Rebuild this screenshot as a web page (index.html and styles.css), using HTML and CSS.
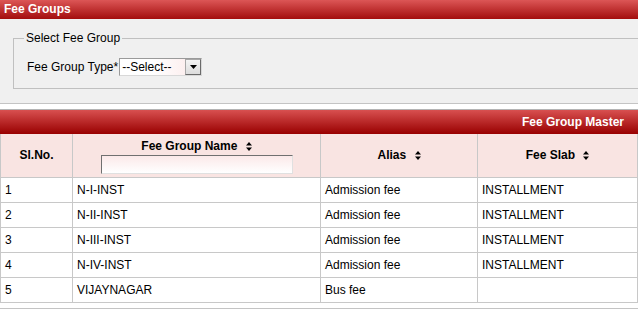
FILE: index.html
```html
<!DOCTYPE html>
<html lang="en">
<head>
  <meta charset="UTF-8" />
  <title>Fee Groups</title>
  <link rel="stylesheet" href="styles.css">
</head>
<body>
  <div class="panel-title">Fee Groups</div>

  <div class="filter-area">
    <fieldset class="group-box">
      <legend>Select Fee Group</legend>
      <div class="field-row">
        <label for="feeGroupType">Fee Group Type*</label>
        <div class="select-box" id="feeGroupType">
          <span class="select-text">--Select--</span>
          <span class="select-btn">
            <svg width="7" height="4" viewBox="0 0 7 4"><polygon points="0,0 7,0 3.5,4" fill="#000"/></svg>
          </span>
        </div>
      </div>
    </fieldset>
  </div>

  <div class="grid-title">Fee Group Master</div>
  <table class="grid">
    <colgroup>
      <col class="c1"><col class="c2"><col class="c3"><col class="c4">
    </colgroup>
    <thead>
      <tr>
        <th>Sl.No.</th>
        <th class="name-head">
          <div>Fee Group Name <span class="sort"><svg width="6" height="9" viewBox="0 0 6 9"><polygon points="0,3.5 3,0 6,3.5"/><polygon points="0,5.5 6,5.5 3,9"/></svg></span></div>
          <input class="filter-input" type="text">
        </th>
        <th>Alias <span class="sort"><svg width="6" height="9" viewBox="0 0 6 9"><polygon points="0,3.5 3,0 6,3.5"/><polygon points="0,5.5 6,5.5 3,9"/></svg></span></th>
        <th>Fee Slab <span class="sort"><svg width="6" height="9" viewBox="0 0 6 9"><polygon points="0,3.5 3,0 6,3.5"/><polygon points="0,5.5 6,5.5 3,9"/></svg></span></th>
      </tr>
    </thead>
    <tbody>
      <tr><td>1</td><td>N-I-INST</td><td>Admission fee</td><td>INSTALLMENT</td></tr>
      <tr><td>2</td><td>N-II-INST</td><td>Admission fee</td><td>INSTALLMENT</td></tr>
      <tr><td>3</td><td>N-III-INST</td><td>Admission fee</td><td>INSTALLMENT</td></tr>
      <tr><td>4</td><td>N-IV-INST</td><td>Admission fee</td><td>INSTALLMENT</td></tr>
      <tr><td>5</td><td>VIJAYNAGAR</td><td>Bus fee</td><td></td></tr>
    </tbody>
  </table>
  <div class="bottom-line"></div>
</body>
</html>
```

FILE: styles.css
```css
* { box-sizing: border-box; }
body {
  margin: 0;
  font-family: 'Liberation Sans', Arial, sans-serif;
  font-size: 12px;
  color: #000;
  background: #fff;
  overflow: hidden;
}
.panel-title {
  height: 19px;
  line-height: 19px;
  padding-left: 4px;
  color: #fff;
  font-weight: bold;
  background: linear-gradient(to bottom, #dc5656, #a30d0d);
}
.filter-area {
  height: 85px;
  background: #f0f0f0;
  border-bottom: 1px solid #c4c4c4;
  padding-top: 12px;
  overflow: hidden;
}
.group-box {
  margin: 0 -10px 0 13px;
  padding: 13px 8px 12px 13px;
  border: 1px solid #c0c0c0;
}
.group-box legend {
  padding: 0 2px;
  margin-left: -3px;
  line-height: 14px;
}
.field-row {
  display: flex;
  align-items: center;
  height: 18px;
}
.field-row label {
  margin-right: 1px;
}
.select-box {
  display: flex;
  width: 83px;
  height: 18px;
  border: 1px solid #9a9a9a;
  border-right-color: #d8d8d8;
  border-bottom-color: #d8d8d8;
  background: linear-gradient(to right, #fff 40%, #fbe8e8);
}
.select-text {
  flex: 1;
  padding-left: 2px;
  line-height: 16px;
}
.select-btn {
  width: 16px;
  display: flex;
  align-items: center;
  justify-content: center;
  background: linear-gradient(to bottom, #f4f4f4, #dcdcdc);
  border: 1px solid #6a6a6a;
  border-top-color: #a8a8a8;
  border-left-color: #a8a8a8;
}
.grid-title {
  margin-top: 5px;
  height: 25px;
  border-top: 1px solid #b4b4b4;
  line-height: 24px;
  text-align: right;
  padding-right: 14px;
  color: #fff;
  font-weight: bold;
  background: linear-gradient(to bottom, #d85050, #990000);
}
.grid {
  width: 637px;
  border-collapse: collapse;
  table-layout: fixed;
}
.grid col.c1 { width: 72px; }
.grid col.c2 { width: 248px; }
.grid col.c3 { width: 157px; }
.grid col.c4 { width: 160px; }
.grid th {
  height: 43px;
  background: #f9e4e2;
  border: 1px solid #c8c8c8;
  border-top: none;
  font-weight: bold;
  text-align: center;
  vertical-align: middle;
  padding: 0;
}
.grid th.name-head {
  vertical-align: top;
  padding-top: 5px;
}
.sort {
  display: inline-block;
  margin-left: 5px;
  vertical-align: -1px;
}
.sort svg { display: block; fill: #000; }
.filter-input {
  display: block;
  width: 192px;
  height: 19px;
  margin: 2px auto 0 28px;
  border: 1px solid #e0e0e0;
  border-top-color: #707070;
  border-left-color: #707070;
  background: linear-gradient(to bottom, #fbe9e9, #fff);
  font: inherit;
}
.grid td {
  height: 25px;
  padding: 0 4px;
  border: 1px solid #c8c8c8;
  white-space: nowrap;
}
.bottom-line {
  margin-top: 5px;
  border-top: 1px solid #c4c4c4;
}
```
